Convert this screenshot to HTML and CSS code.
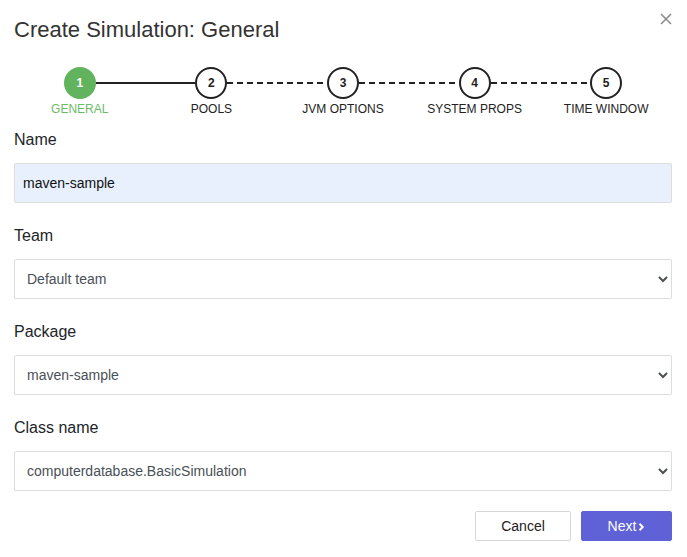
FILE: index.html
```html
<!DOCTYPE html>
<html>
<head>
<meta charset="utf-8">
<link rel="stylesheet" href="styles.css">
</head>
<body>
<div class="modal">
  <div class="header">
    <h1 class="title">Create Simulation: General</h1>
    <button class="close" aria-label="Close"><svg width="12" height="12" viewBox="0 0 12 12"><path d="M1 1 L11 11 M11 1 L1 11" stroke="#8c8c8c" stroke-width="1.6" fill="none"/></svg></button>
  </div>
  <ol class="stepper">
    <li class="step done active"><span class="dot">1</span><span class="step-label">GENERAL</span></li>
    <li class="step"><span class="dot">2</span><span class="step-label">POOLS</span></li>
    <li class="step"><span class="dot">3</span><span class="step-label">JVM OPTIONS</span></li>
    <li class="step"><span class="dot">4</span><span class="step-label">SYSTEM PROPS</span></li>
    <li class="step last"><span class="dot">5</span><span class="step-label">TIME WINDOW</span></li>
  </ol>
  <form class="form">
    <div class="field">
      <label class="label">Name</label>
      <input class="control autofill" type="text" value="maven-sample">
    </div>
    <div class="field">
      <label class="label">Team</label>
      <select class="control select"><option>Default team</option></select>
    </div>
    <div class="field">
      <label class="label">Package</label>
      <select class="control select"><option>maven-sample</option></select>
    </div>
    <div class="field">
      <label class="label">Class name</label>
      <select class="control select"><option>computerdatabase.BasicSimulation</option></select>
    </div>
    <div class="actions">
      <button type="button" class="btn btn-cancel">Cancel</button>
      <button type="button" class="btn btn-next">Next<svg class="chev" width="7" height="10" viewBox="0 0 7 10"><path d="M1.5 1.8 L4.7 5 L1.5 8.2" fill="none" stroke="#fff" stroke-width="2"/></svg></button>
    </div>
  </form>
</div>
</body>
</html>
```
FILE: styles.css
```css
* { box-sizing: border-box; }
html, body { margin: 0; padding: 0; background: #fff; }
body {
  font-family: "Liberation Sans", Arial, sans-serif;
  color: #212529;
  width: 687px;
  height: 557px;
  overflow: hidden;
}
.modal {
  padding: 15px 15px 0 14px;
}
.header {
  display: flex;
  justify-content: space-between;
  align-items: flex-start;
}
.title {
  margin: 0;
  font-size: 22px;
  font-weight: normal;
  line-height: 30px;
  color: #333;
}
.close {
  border: 0;
  background: none;
  padding: 0;
  margin: -2px 0 0 0;
  width: 12px;
  height: 12px;
  display: flex;
  cursor: pointer;
}
.stepper {
  list-style: none;
  margin: 22px 0 0;
  padding: 0;
  display: grid;
  grid-template-columns: repeat(5, 1fr);
}
.step {
  position: relative;
  display: flex;
  flex-direction: column;
  align-items: center;
}
.step::after {
  content: "";
  position: absolute;
  top: 15px;
  left: calc(50% + 16px);
  width: calc(100% - 32px);
  height: 2px;
  background: repeating-linear-gradient(90deg, #222 0 6px, transparent 6px 10px);
}
.step.done::after { background: #222; }
.step.last::after { display: none; }
.dot {
  width: 32px;
  height: 32px;
  border-radius: 50%;
  border: 2px solid #222;
  background: #fff;
  display: flex;
  align-items: center;
  justify-content: center;
  font-size: 12px;
  font-weight: bold;
  color: #222;
  position: relative;
  z-index: 1;
}
.step.active .dot {
  background: #62b35d;
  border-color: #62b35d;
  color: #fff;
}
.step-label {
  margin-top: 2px;
  font-size: 12px;
  line-height: 16px;
  color: #222;
}
.step.active .step-label { color: #6cbb67; }
.form {
  margin-top: 13px;
  display: flex;
  flex-direction: column;
}
.field {
  display: flex;
  flex-direction: column;
  margin-bottom: 23px;
}
.label {
  font-size: 16px;
  line-height: 20px;
  color: #212529;
  margin-bottom: 13px;
}
.control {
  height: 40px;
  width: 100%;
  border: 1px solid #dcdcdc;
  border-radius: 2px;
  font-family: "Liberation Sans", Arial, sans-serif;
  font-size: 14px;
  padding: 0 12px;
  background: #fff;
  color: #495057;
  outline: none;
}
.autofill {
  background: #e8f0fe;
  color: #111;
  padding: 0 8px;
}
.select { padding: 0 8px; }
.actions {
  display: flex;
  justify-content: flex-end;
  gap: 10px;
  margin-top: -3px;
}
.btn {
  height: 30px;
  border-radius: 2px;
  font-family: "Liberation Sans", Arial, sans-serif;
  font-size: 14px;
  padding: 0 0 1px;
  display: flex;
  align-items: center;
  justify-content: center;
  cursor: pointer;
}
.btn-cancel {
  width: 96px;
  background: #fff;
  border: 1px solid #d6d6d6;
  color: #222;
}
.btn-next {
  width: 91px;
  background: #5f62d6;
  border: 1px solid #5f62d6;
  color: #fff;
}
.chev { margin-left: 2px; margin-top: 2px; }
```
